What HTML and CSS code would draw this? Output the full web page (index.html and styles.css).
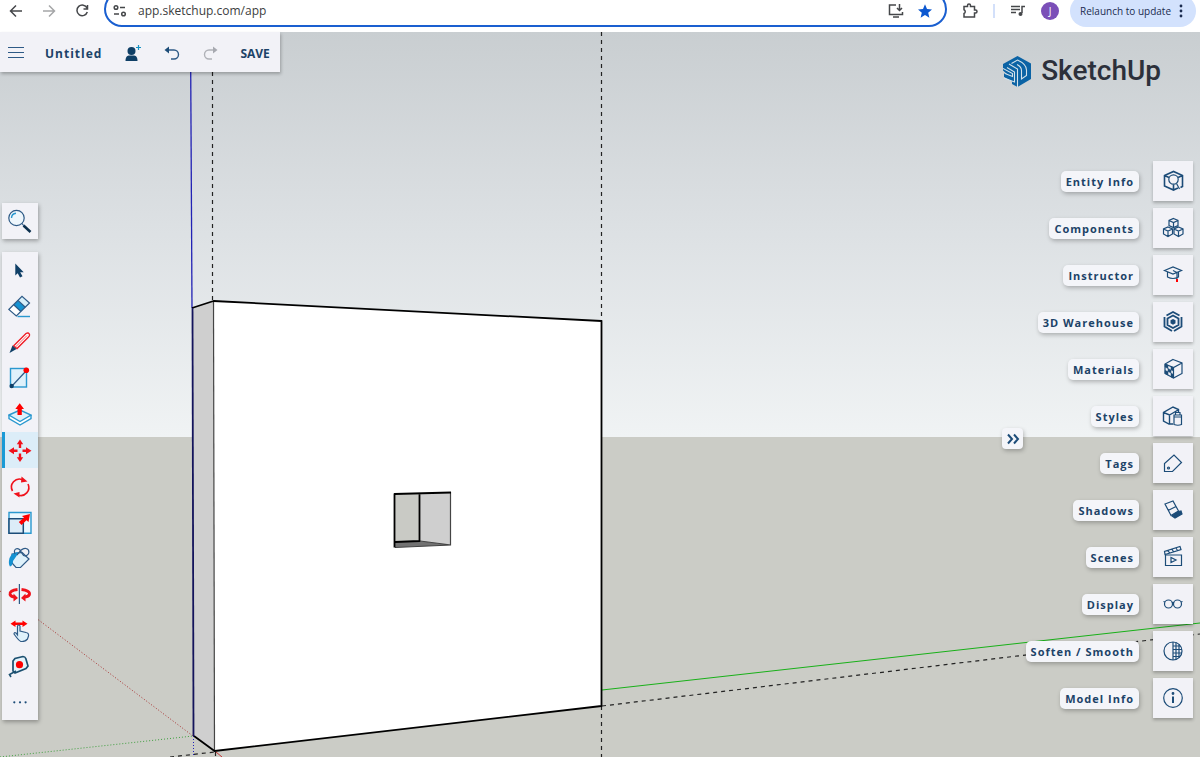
FILE: index.html
```html
<!DOCTYPE html>
<html lang="en">
<head>
<meta charset="utf-8">
<title>SketchUp</title>
<link rel="stylesheet" href="styles.css">
</head>
<body>
<header class="browser">
  <nav class="browser-nav" aria-label="Browser">
    <button class="chrome-btn" aria-label="Back"><svg viewBox="0 0 16 16"><path d="M14 8H3M8 2.500L2.500 8L8 13.500"/></svg></button>
    <button class="chrome-btn faded" aria-label="Forward" disabled><svg viewBox="0 0 16 16"><path d="M2 8H13M8 2.500L13.500 8L8 13.500"/></svg></button>
    <button class="chrome-btn" aria-label="Reload"><svg viewBox="0 0 16 16"><path d="M13 5A5.300 5.300 0 1 0 13.300 9M13.500 2V6H9.500"/></svg></button>
  </nav>
  <div class="address">
    <svg class="tune" viewBox="0 0 16 16"><circle cx="4" cy="4.500" r="1.800"/><path d="M8 4.500H13M2 11H7"/><circle cx="11.500" cy="11" r="1.800"/></svg>
    <input class="url" type="text" aria-label="Address" value="app.sketchup.com/app">
    <button class="chrome-btn" aria-label="Install app"><svg viewBox="0 0 16 16"><path d="M8 2H1.500V11.500H14.500V9M5 14H11M11.500 1V7M9 5L11.500 7.500L14 5"/></svg></button>
    <button class="chrome-btn star" aria-label="Bookmark"><svg viewBox="0 0 16 16"><path d="M8 1.200L10 6L15 6.400L11.200 9.700L12.400 14.700L8 12L3.600 14.700L4.800 9.700L1 6.400L6 6Z"/></svg></button>
  </div>
  <div class="browser-tools">
    <button class="chrome-btn" aria-label="Extensions"><svg viewBox="0 0 16 16"><path d="M2 3.500H5.500V2.500A1.500 1.500 0 0 1 8.500 2.500V3.500H12.500V7H13.500A1.400 1.400 0 0 1 13.500 10H12.500V14H2V10.500A2 2 0 0 0 2 6.800Z"/></svg></button>
    <span class="divider"></span>
    <button class="chrome-btn media" aria-label="Media"><svg viewBox="0 0 16 16"><path d="M1 3.500H10M1 6.500H10M1 9.500H6M12 10V3.500H15"/><circle class="solid" cx="10.500" cy="11" r="2"/></svg></button>
    <button class="avatar" aria-label="Profile">J</button>
    <button class="relaunch">Relaunch to update<svg viewBox="0 0 4 16"><circle cx="2" cy="3" r="1.400"/><circle cx="2" cy="8" r="1.400"/><circle cx="2" cy="13" r="1.400"/></svg></button>
  </div>
</header>

<main class="stage">
  <svg class="scene" viewBox="0 32 1200 725" preserveAspectRatio="none" role="img" aria-label="Model view">
    <defs><linearGradient id="sky" x1="0" y1="0" x2="0" y2="1"><stop offset="0" stop-color="#c9ced1"/><stop offset=".5" stop-color="#dde1e4"/><stop offset="1" stop-color="#f0f3f4"/></linearGradient></defs>
    <rect y="32" width="1200" height="405" fill="url(#sky)"/>
    <rect y="437" width="1200" height="320" fill="#cbccc6"/>
    <path class="guide" d="M212.500 32V301M601.500 32V321M601.500 706V757M602 706L1200 634M170 757L215 752M215.500 752V757"/>
    <path class="dots red" d="M0 591L193 736"/>
    <path class="dots green" d="M0 757L193 736"/>
    <path class="dots blue" d="M193.500 736V757"/>
    <path class="axis green" d="M602 690L1200 623"/>
    <path class="axis red" d="M216 752L222 757"/>
    <path d="M192 308L213.500 301L214.500 751L194 736Z" fill="#cfcfcf"/>
    <path d="M213.500 301L601.500 321V706L214.500 751Z" fill="#fff"/>
    <path class="axis blue" d="M190.500 32L192 308"/>
    <path class="seam" d="M213.500 301L214.500 751"/>
    <path class="edge" d="M192 308L213.500 301L601.500 321V706L214.500 751L194 736"/>
    <path class="edge navy" d="M192.500 308L193.500 736"/>
    <path d="M395 494L420 493V541L395 542Z" fill="#c9cac5"/>
    <path d="M420 493L451 492V545L420 541Z" fill="#cfcfcf"/>
    <path d="M395 542L420 541L451 545L395 547.500Z" fill="#727272"/>
    <path class="seam" d="M450.500 492V545L395 547.500M420 541L451 545"/>
    <path class="edge" d="M394.500 547.500V494L451 492.500M419.500 493V541L395 542"/>
  </svg>

  <div class="topbar">
    <button class="top-btn menu" aria-label="Menu"><svg viewBox="0 0 18 18"><path d="M1 3.500H17M1 8.500H17M1 13.500H17"/></svg></button>
    <button class="doc-name">Untitled</button>
    <button class="top-btn" aria-label="Share"><svg viewBox="0 0 18 18"><circle cx="7.500" cy="7" r="4" fill="#0f3f66" stroke="none"/><path d="M1.500 17C1.500 12.500 3.500 11.500 5.500 11.500H9.500C11.500 11.500 13.500 12.500 13.500 17Z" fill="#0f3f66" stroke="none"/><path d="M14.500 1V6M12 3.500H17" stroke="#1592c4"/></svg></button>
    <button class="top-btn" aria-label="Undo"><svg viewBox="0 0 18 18"><path d="M4 6H11A4.500 4.500 0 0 1 11 15H8" stroke-width="1.400"/><path d="M1.500 6L6 2.500V9.500Z" fill="#1c4c78" stroke="none"/></svg></button>
    <button class="top-btn disabled" aria-label="Redo" disabled><svg viewBox="0 0 18 18"><path d="M13 6H7A4.500 4.500 0 0 0 7 15H10" stroke-width="1.400"/><path d="M15.500 6L11 2.500V9.500Z" fill="#a7a9b0" stroke="none"/></svg></button>
    <button class="save">SAVE</button>
  </div>

  <div class="brand">
    <svg viewBox="0 0 28 31"><path d="M14.500 0L28 7.500V23L14.500 31L9 28V25.500L1 21V17.500L4 18L0 14.500V8Z" fill="#0b63a5"/><path class="cut" d="M0 12.500L9.500 17.500V20.500L2 17.500M1 22L11.500 26V16L4 11.500M6 8L14.500 13V31M8.500 7.500L14.500 4C21 7 23.500 9.500 23.500 14V19.500L18.500 23V14.500C18.500 11.500 17 10 14 8.500"/></svg>
    <span>SketchUp</span>
  </div>

  <div class="left-tools">
    <div class="tool-card"><button class="tool" aria-label="Search"><svg viewBox="0 0 24 24"><circle class="n" cx="8.500" cy="9" r="7.700" fill="#eef6fc"/><path class="c" d="M3.500 9A5 5 0 0 1 8 4.200"/><path d="M15.500 16.500L22.500 23" stroke="#0b2f4d" stroke-width="2.600"/><path class="n" d="M14 14.500L16 17"/></svg></button></div>
    <div class="tool-card">
      <button class="tool" aria-label="Select"><svg viewBox="0 0 24 24"><path d="M7.300 5.500V17.500L9.700 15.300L12 19.500L14.500 18.300L12.200 14.200H15.700Z" fill="#0f3f66"/></svg></button>
      <button class="tool" aria-label="Eraser"><svg viewBox="0 0 24 24"><path d="M.8 15.500L14 2.300L21.500 9L8.300 22Z" fill="#fff"/><path d="M5.700 10.700L10 6.400L17.300 13.200L12.900 17.500Z" fill="#1592d2"/><path d="M10 6.400L14 2.300L21.500 9L17.300 13.200Z" fill="#d7effa"/><path class="n" d="M.8 15.500L14 2.300L21.500 9L8.300 22Z"/><path class="n" d="M5.700 10.700L12.900 17.500M10 6.400L17.300 13.200"/><path class="c" d="M9.500 22.500H22"/></svg></button>
      <button class="tool" aria-label="Line"><svg viewBox="0 0 24 24"><path d="M5.500 16L18 3.500Q20.500 2 21.500 4.500Q21.800 6 20.500 7L9 18.500Z" fill="#fff" stroke="#ee1c25" stroke-width="1.400"/><path d="M1.500 23L4.500 15.500L8.500 19Z" fill="#0f3f66"/><path d="M7.500 17L19 5.500" stroke="#ee1c25" stroke-width=".7"/></svg></button>
      <button class="tool" aria-label="Rectangle"><svg viewBox="0 0 24 24"><rect class="c" x="2.500" y="2.500" width="16" height="18.500" fill="#dff1fb"/><path class="n" d="M4 20L18 5"/><circle cx="18.300" cy="4.300" r="2.800" fill="#f00"/><circle cx="3.700" cy="20" r="2.200" fill="#0f3f66"/></svg></button>
      <button class="tool" aria-label="Push/Pull"><svg viewBox="0 0 24 24"><path class="c" d="M1 13V16.500L12 23L23 16.500V13" fill="#fff"/><path class="c" d="M1 13L12 8L23 13L12 19.500Z" fill="#dff1fb"/><path d="M9.500 13V7H7.300L11.700 1.200L16 7H13.800V13Z" fill="#f00"/></svg></button>
      <button class="tool selected" aria-label="Move" aria-pressed="true"><svg viewBox="0 0 24 24"><path d="M12 1.500L15.200 6.200H13.200V10H10.800V6.200H8.800ZM12 24L15.200 19.300H13.200V15.500H10.800V19.300H8.800ZM.5 12.700L6 9.200V11.500H9.500V14H6V16.200ZM23.500 12.700L18 9.200V11.500H14.500V14H18V16.200Z" fill="#f0121c"/></svg></button>
      <button class="tool" aria-label="Rotate"><svg viewBox="0 0 24 24"><path d="M4.500 17A8 8 0 0 1 14.500 5.700M20 10A8 8 0 0 1 10 21" fill="none" stroke="#f0121c" stroke-width="1.600"/><path d="M13.500 2.500L19.500 7.500L13 8.500ZM11.500 18V23.500L5.500 19.500Z" fill="#f0121c"/></svg></button>
      <button class="tool" aria-label="Scale"><svg viewBox="0 0 24 24"><path class="c" d="M1 2.500H23V23.300H1Z" fill="#eaf7fe" stroke-width="1.600"/><path d="M1 8.700H15.300V23.300H1Z" fill="#dcecf8" stroke="#1c4c78" stroke-width="1.500"/><path d="M14 6L22 4L20.500 12L18.500 10.300L13.500 15L10.800 12L16 7.800Z" fill="#f00"/></svg></button>
      <button class="tool" aria-label="Paint"><svg viewBox="0 0 24 24"><path class="n" d="M4 8L14 6.500L21 13L12.500 21.500H8L4 17Z" fill="#dff1fb"/><path d="M10 6Q4 6 1.500 12Q0 18 2 20.500Q4.500 20 5 15L9.500 8.500Z" fill="#1592d2"/><path class="n" d="M7 8C5 3 9 1.500 11.500 3.500C14 6 14 10 17 10C22 9 22 3.500 18 2.500C13 2 12 6 9 9"/></svg></button>
      <button class="tool" aria-label="Flip"><svg viewBox="0 0 24 24"><path d="M9.500 7.500C4 8 1.500 10 2 12.500C3 14.500 5 15 7 15M13.500 7.500C19 8 22 10 21.500 12.500C20.500 14.500 18 15 16 15" fill="none" stroke="#f0121c" stroke-width="2.800"/><path d="M10 16L5.500 11.500V19.500ZM13 16L17.500 11.500V19.500Z" fill="#f0121c"/><path class="n" d="M11.400 2V22" stroke-width="1.500"/></svg></button>
      <button class="tool" aria-label="Resize"><svg viewBox="0 0 24 24"><path d="M2.500 5.700L7.500 2.500V4.600H14.500V2.500L19.500 5.700L14.500 9V6.900H7.500V9Z" fill="#f00"/><path class="n" d="M9.500 17V8Q10.800 6 12 8V13L18 14.500Q21 15 20.500 18L19.500 21Q17 24 13 23.500Q11 23 6 16Q6 14 8 15Z" fill="#dff1fb"/></svg></button>
      <button class="tool" aria-label="Tape measure"><svg viewBox="0 0 24 24"><path d="M5 7L7 4.500L15 2.500Q17 2.500 17.800 4.500L20 12L18 14.500L7 19L5 17Z" fill="#e4f3fb" stroke="#1c5070" stroke-width="1.700"/><path d="M8 17L1.500 20.500L3 23" fill="none" stroke="#1c5070" stroke-width="1.600"/><circle cx="11.500" cy="10.700" r="3.600" fill="#f00"/></svg></button>
      <button class="tool" aria-label="More tools"><svg viewBox="0 0 24 24"><g fill="#1c4c78"><circle cx="6.300" cy="12.300" r="1.100"/><circle cx="12" cy="12.300" r="1.100"/><circle cx="17.600" cy="12.300" r="1.100"/></g></svg></button>
    </div>
  </div>

  <button class="collapse" aria-label="Collapse panels"><svg viewBox="0 0 14 12"><path d="M2 1.500L6 6L2 10.500M8 1.500L12 6L8 10.500"/></svg></button>

  <div class="panels">
    <button class="panel"><span class="tag">Entity Info</span><span class="tile"><svg viewBox="0 0 24 24"><path d="M17 19L12.500 21L3.500 17V6.500L12.500 2.500L21.500 6.500V17.500L19.500 18.500M3.500 6.500L8 8.500M21.500 6.500L17 8.500M12.500 15.500V21" stroke-width="1.600"/><circle cx="12.500" cy="10.500" r="4.700"/><path d="M15.500 14.500L18.500 20"/></svg></span></button>
    <button class="panel"><span class="tag">Components</span><span class="tile"><svg viewBox="0 0 24 24"><path d="M12.500 2.500L17 4.500V9.500L12.500 11.500L8 9.500V4.500ZM8 4.500L12.500 6.500L17 4.500M12.500 6.500V11.500M7 11L11.500 13V18L7 20.500L2.500 18V13ZM2.500 13L7 15L11.500 13M7 15V20.500M17.500 11L22 13V18L17.500 20.500L13 18V13ZM13 13L17.500 15L22 13M17.500 15V20.500"/></svg></span></button>
    <button class="panel"><span class="tag">Instructor</span><span class="tile"><svg viewBox="0 0 24 24"><path d="M3.500 7.500L12 4L20.500 7.500L12 11ZM6.500 9V14Q12 17 17.500 14V9M12 7.500L16 9.500V16"/><path d="M16 16V19" stroke="#f00" stroke-width="2"/></svg></span></button>
    <button class="panel"><span class="tag">3D Warehouse</span><span class="tile"><svg viewBox="0 0 24 24"><path d="M5.500 5.500L12 2L18.500 5.500M20.500 7V16.500L13 21M11 21L3.500 16.500V7M6.500 15V8.500L12 5.500L17.500 8.500V15L12 18Z" stroke-width="1.800"/><path class="f" d="M12 9L14.500 10.300V13.200L12 14.700L9.500 13.200V10.300Z" stroke="none"/></svg></span></button>
    <button class="panel"><span class="tag">Materials</span><span class="tile"><svg viewBox="0 0 24 24"><path d="M12 2.500L21 6V16.500L12.500 21L4 16.500V7ZM4 7L12.500 10.500L21 6M12.500 10.500V21"/><path class="f" d="M4 7L7 8.200V11.500L4 10ZM7 11.500L10 13V16L7 14.500ZM10 9.500L12.500 10.500V14L10 13ZM4 13.500L7 14.500V18L4 16.500ZM10 16L12.500 17.500V21L10 20Z" stroke-width=".5"/></svg></span></button>
    <button class="panel"><span class="tag">Styles</span><span class="tile"><svg viewBox="0 0 24 24"><path d="M12 20H8L2.500 17V8.500L12 3L17.500 5.500V8M2.500 8.500L8.500 11L17 6M8.500 11V20" stroke-width="1.400"/><path d="M13 11H20.500V20.500Q17 22 13 20.500ZM13 13H20.500M14.500 11V8.500H19V11"/></svg></span></button>
    <button class="panel"><span class="tag">Tags</span><span class="tile"><svg viewBox="0 0 24 24"><path d="M3.500 20.500V12.500L13 4L20.500 11.500L11.500 20.500Z"/><circle cx="7.500" cy="17" r="1"/></svg></span></button>
    <button class="panel"><span class="tag">Shadows</span><span class="tile"><svg viewBox="0 0 24 24"><path class="f" d="M17.500 13.500L20 13L21 16L14 20L11 18L13.500 16Z"/><path d="M4 6L12 3L17.500 13L10 17.500ZM7 12.500L15 8.500"/></svg></span></button>
    <button class="panel"><span class="tag">Scenes</span><span class="tile"><svg viewBox="0 0 24 24"><path d="M4.500 10H20.500V20.500H4.500ZM10 12.500V17.500L15 15Z"/><path d="M4 9.500L3.500 6.500L19 1.500L20 4.500ZM7 5.500L8.500 8M11 4.200L12.500 6.800M15 3L16.500 5.500"/></svg></span></button>
    <button class="panel"><span class="tag">Display</span><span class="tile"><svg viewBox="0 0 24 24"><circle cx="7.500" cy="12" r="4"/><circle cx="16.500" cy="12" r="4"/><path d="M11 11Q12 9.500 13 11M4 10L2.500 9.500M20 10L21.500 9.500"/></svg></span></button>
    <button class="panel"><span class="tag">Soften / Smooth</span><span class="tile"><svg viewBox="0 0 24 24"><circle cx="12" cy="12" r="9"/><path d="M12 3V21M15 3.500V20.500M18 5.500V18.500M12 7H19M12 10.500H21M12 14H21M12 17.500H19"/></svg></span></button>
    <button class="panel"><span class="tag">Model Info</span><span class="tile"><svg viewBox="0 0 24 24"><circle cx="12" cy="12" r="9.300"/><path d="M12 10.500V17" stroke-width="2"/><circle class="f" cx="12" cy="7.500" r=".8"/></svg></span></button>
  </div>
</main>
</body>
</html>
```

FILE: styles.css
```css
* { box-sizing: border-box; }

body {
  margin: 0;
  height: 100vh;
  display: flex;
  flex-direction: column;
  overflow: hidden;
  font-family: "Open Sans", "Noto Sans", sans-serif;
  color: #1c4368;
}

button {
  margin: 0;
  padding: 0;
  border: 0;
  background: none;
  font: inherit;
  color: inherit;
}

svg { display: block; flex: none; }

/* Browser strip */
.browser {
  flex: none;
  height: 32px;
  display: flex;
  align-items: flex-start;
  background: #fff;
  overflow: hidden;
}
.browser-nav, .browser-tools {
  display: flex;
  align-items: center;
  height: 22px;
}
.browser-nav { gap: 17px; padding: 0 14px 0 8px; }
.chrome-btn svg, .tune {
  width: 16px;
  height: 16px;
  fill: none;
  stroke: #45474a;
  stroke-width: 1.5;
}
.chrome-btn svg .solid { fill: #45474a; stroke: none; }
.chrome-btn.faded svg { stroke: #a5a6a8; }
.chrome-btn.star svg { fill: #0b57d0; stroke: none; }
.address {
  flex: 1;
  height: 36px;
  margin-top: -9px;
  padding: 3px 12px 0 6px;
  display: flex;
  align-items: center;
  gap: 13px;
  border: 2px solid #1a5fd0;
  border-radius: 18px;
}
.url {
  flex: 1;
  min-width: 0;
  margin-left: -3px;
  padding: 0;
  border: 0;
  outline: 0;
  background: none;
  font: 12px/20px "Open Sans", sans-serif;
  color: #3c3d40;
}
.browser-tools { padding: 0 4px 0 15px; gap: 15px; }
.divider { width: 2px; height: 14px; background: #d3e0fa; }
.avatar {
  width: 18px;
  height: 18px;
  border-radius: 50%;
  background: #7b4fb8;
  color: #fff;
  font-size: 10px;
  line-height: 18px;
}
.relaunch {
  display: flex;
  align-items: center;
  gap: 8px;
  height: 32px;
  margin-left: -4px;
  padding: 0 13px 0 10px;
  border-radius: 16px;
  background: #d3e2fd;
  color: #1b2c50;
  font-size: 10px;
  font-weight: 500;
}
.relaunch svg { width: 4px; height: 16px; fill: #1b2c50; }

/* Drawing area with floating controls */
.stage {
  flex: 1;
  min-height: 0;
  position: relative;
}
.scene { position: absolute; inset: 0; width: 100%; height: 100%; }
.guide { fill: none; stroke: #222; stroke-width: 1.2; stroke-dasharray: 4 4; }
.edge { fill: none; stroke: #000; stroke-width: 1.8; stroke-linejoin: round; }
.edge.navy { stroke: #14145c; }
.seam { fill: none; stroke: #444; stroke-width: 1.2; }
.axis, .dots { fill: none; stroke-width: 1; }
.dots { stroke-dasharray: 1 2; }
.axis.green { stroke: #18b018; }
.axis.red { stroke: #c43030; }
.axis.blue { stroke: #2222b4; stroke-width: 1.3; }
.dots.green { stroke: #3f9f3f; }
.dots.red { stroke: #a33; }
.dots.blue { stroke: #22b; }

.topbar {
  position: absolute;
  top: 0;
  left: 0;
  height: 40px;
  padding: 2px 10px 0 7px;
  display: flex;
  align-items: center;
  background: #f2f2f7;
  box-shadow: 1px 2px 3px rgba(0, 0, 0, .25);
  font-weight: 700;
  font-size: 12px;
}
.top-btn svg {
  width: 18px;
  height: 18px;
  fill: none;
  stroke: #2e5a86;
  stroke-width: 1.2;
}
.top-btn + .top-btn { margin-left: 21px; }
.top-btn.disabled svg { stroke: #b0b2b8; }
.doc-name { margin: 0 22px 0 20px; letter-spacing: 1px; }
.save { margin-left: 20px; }

.brand {
  position: absolute;
  top: 23px;
  right: 39px;
  display: flex;
  align-items: center;
  gap: 10px;
  font: 500 28px/32px Roboto, sans-serif;
  color: #2c303b;
}
.brand svg { width: 28px; height: 31px; }
.cut { fill: none; stroke: #d4e2ea; stroke-width: 1.1; }

.left-tools {
  position: absolute;
  top: 171px;
  left: 2px;
  display: flex;
  flex-direction: column;
  gap: 13px;
}
.tool-card {
  width: 36px;
  background: #f2f2f7;
  box-shadow: 1px 2px 4px rgba(0, 0, 0, .3);
}
.tool {
  width: 36px;
  height: 36px;
  display: flex;
  align-items: center;
  justify-content: center;
}
.tool svg { width: 24px; height: 24px; }
.tool .n { stroke: #2e5a86; stroke-width: 1.2; }
.tool .c { stroke: #2a98cf; stroke-width: 1.4; }
.tool path.n:not([fill]), .tool path.c:not([fill]) { fill: none; }
.tool.selected {
  background: #dcedf8;
  box-shadow: inset 3px 0 #1a9ad6;
}

.collapse {
  position: absolute;
  top: 396px;
  right: 177px;
  width: 21px;
  height: 21px;
  display: grid;
  place-items: center;
  border-radius: 4px;
  background: #f4f5f9;
  box-shadow: 1px 2px 4px rgba(0, 0, 0, .25);
}
.collapse svg { width: 14px; height: 12px; fill: none; stroke: #1c4c78; stroke-width: 2; }

.panels {
  position: absolute;
  top: 129px;
  right: 7px;
  display: flex;
  flex-direction: column;
  align-items: flex-end;
  gap: 7px;
}
.panel {
  display: flex;
  align-items: center;
  gap: 14px;
}
.tag {
  padding: 0 5px;
  border-radius: 5px;
  background: #f4f5f9;
  box-shadow: 1px 2px 4px rgba(0, 0, 0, .25);
  font-weight: 700;
  font-size: 11px;
  line-height: 21px;
  letter-spacing: 1px;
}
.tile {
  width: 40px;
  height: 40px;
  display: grid;
  place-items: center;
  background: #f2f2f7;
  box-shadow: 0 2px 3px rgba(0, 0, 0, .25);
}
.tile svg {
  width: 24px;
  height: 24px;
  fill: none;
  stroke: #1c4c78;
  stroke-width: 1.2;
}
.tile .f { fill: #1c4c78; }
```
